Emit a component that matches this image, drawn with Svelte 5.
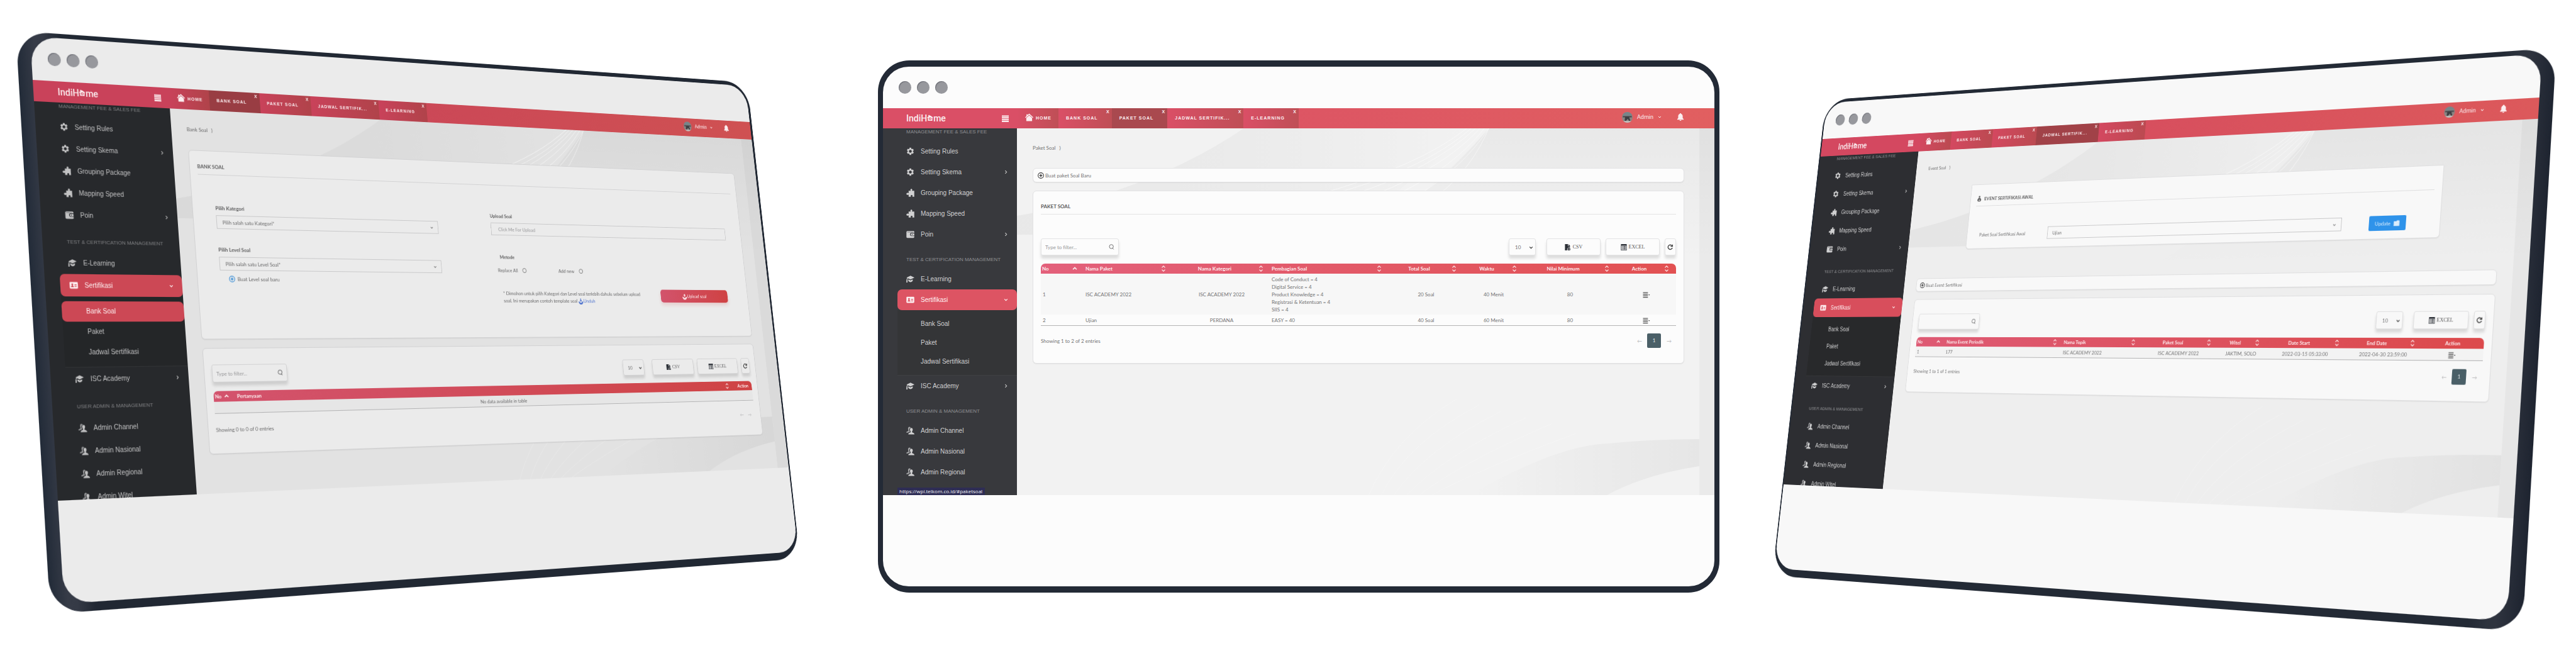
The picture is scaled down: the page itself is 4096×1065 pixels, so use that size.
<script>
  const UNIT = 4096;

  const tabs = ['BANK SOAL', 'PAKET SOAL', 'JADWAL SERTIFIK...', 'E-LEARNING'];

  const menuTop = [
    { icon: 'gear', label: 'Setting Rules' },
    { icon: 'gear', label: 'Setting Skema', more: true },
    { icon: 'puzzle', label: 'Grouping Package' },
    { icon: 'puzzle', label: 'Mapping Speed' },
    { icon: 'wallet', label: 'Poin', more: true }
  ];
  const submenu = ['Bank Soal', 'Paket', 'Jadwal Sertifikasi'];
  const admins = ['Admin Channel', 'Admin Nasional', 'Admin Regional'];

  // Corner order: top left, top right, bottom right, bottom left.
  const devices = [
    {
      id: 'bank',
      tab: 0,
      crumb: 'Bank Soal',
      sub: 0,
      body: [[25, 49], [1188, 131], [1272, 888], [80, 976]],
      face: [[52, 127], [1192, 194], [1254, 743], [92, 796]],
      admins: [...admins, 'Admin Witel'],
      csv: true,
      filter: true,
      columns: [
        { label: 'No', width: 36, sort: 'up' },
        { label: 'Pertanyaan', width: 936, sort: 'both' },
        { label: 'Action', width: 38, center: true }
      ],
      rows: [],
      info: 'Showing 0 to 0 of 0 entries'
    },
    {
      id: 'paket',
      tab: 1,
      crumb: 'Paket Soal',
      title: 'PAKET SOAL',
      create: 'Buat paket Soal Baru',
      admins,
      csv: true,
      filter: true,
      status: 'https://wpi.telkom.co.id/#paketsoal',
      columns: [
        { label: 'No', width: 69, sort: 'up' },
        { label: 'Nama Paket', width: 141, sort: 'both' },
        { label: 'Nama Kategori', width: 155, sort: 'both', center: true },
        { label: 'Pembagian Soal', width: 188, sort: 'both' },
        { label: 'Total Soal', width: 119, sort: 'both', center: true },
        { label: 'Waktu', width: 96, sort: 'both', center: true },
        { label: 'Nilai Minimum', width: 147, sort: 'both', center: true },
        { label: 'Action', width: 95, sort: 'both', center: true }
      ],
      rows: [
        ['1', 'ISC ACADEMY 2022', 'ISC ACADEMY 2022', 'Code of Conduct = 4\nDigital Service = 4\nProduct Knowledge = 4\nRegistrasi & Ketentuan = 4\nSIIS = 4', '20 Soal', '40 Menit', '80', null],
        ['2', 'Ujian', 'PERDANA', 'EASY = 40', '40 Soal', '60 Menit', '80', null]
      ],
      info: 'Showing 1 to 2 of 2 entries'
    },
    {
      id: 'event',
      tab: 2,
      crumb: 'Event Soal',
      create: 'Buat Event Sertifikasi',
      admins: [...admins, 'Admin Witel'],
      body: [[2903, 159], [4065, 76], [4011, 1004], [2818, 915]],
      face: [[2898, 221], [4038, 155], [3997, 824], [2836, 770]],
      columns: [
        { label: 'No', width: 60, sort: 'up' },
        { label: 'Nama Event Periodik', width: 231, sort: 'both' },
        { label: 'Nama Topik', width: 147, sort: 'both' },
        { label: 'Paket Soal', width: 136, sort: 'both', center: true },
        { label: 'Witel', width: 84, sort: 'both', center: true },
        { label: 'Date Start', width: 134, sort: 'both', center: true },
        { label: 'End Date', width: 122, sort: 'both', center: true },
        { label: 'Action', width: 96, center: true }
      ],
      rows: [
        ['1', '177', 'ISC ACADEMY 2022', 'ISC ACADEMY 2022', 'JAKTIM, SOLO', '2022-03-15 05:33:00', '2022-04-30 23:59:00', null]
      ],
      info: 'Showing 1 to 1 of 1 entries'
    }
  ];

  // Matrix that carries the rectangle (0, top, w, h) onto a quadrilateral.
  function matrix(top, w, h, [p0, p1, p2, p3]) {
    const dx1 = p1[0] - p2[0], dx2 = p3[0] - p2[0], dx3 = p0[0] - p1[0] + p2[0] - p3[0];
    const dy1 = p1[1] - p2[1], dy2 = p3[1] - p2[1], dy3 = p0[1] - p1[1] + p2[1] - p3[1];
    const det = dx1 * dy2 - dx2 * dy1;
    const g = (dx3 * dy2 - dx2 * dy3) / det;
    const k = (dx1 * dy3 - dx3 * dy1) / det;
    const col = [(p1[0] - p0[0] + g * p1[0]) / w, (p1[1] - p0[1] + g * p1[1]) / w, g / w];
    const row = [(p3[0] - p0[0] + k * p3[0]) / h, (p3[1] - p0[1] + k * p3[1]) / h, k / h];
    const org = [p0[0] - row[0] * top, p0[1] - row[1] * top, 1 - row[2] * top];
    return `matrix3d(${[col[0], col[1], 0, col[2], row[0], row[1], 0, row[2], 0, 0, 1, 0, org[0], org[1], 0, org[2]].join(',')})`;
  }

  // Tilts a layer of a device; the quad is anchored to the layer's app area if it has one.
  function tilt(node, quad) {
    if (!quad) return;
    const device = node.parentElement;
    const scene = device.parentElement;
    const update = () => {
      const scale = scene.clientWidth / UNIT;
      const x = device.offsetLeft + node.offsetLeft;
      const y = device.offsetTop + node.offsetTop;
      const app = node.querySelector('.app');
      const local = quad.map(([px, py]) => [px * scale - x, py * scale - y]);
      node.style.transform = matrix(
        app ? app.offsetTop : 0,
        node.offsetWidth,
        app ? app.offsetHeight : node.offsetHeight,
        local
      );
    };
    const watcher = new ResizeObserver(update);
    watcher.observe(scene);
    watcher.observe(node);
    update();
    return { destroy: () => watcher.disconnect() };
  }
</script>

{#snippet icon(name)}
  <svg class="icon" viewBox="0 0 24 24" fill="currentColor" aria-hidden="true">
    {#if name === 'gear'}
      <path d="M19.6 12.9c.04-.3.06-.6.06-.9s-.02-.6-.07-.9l2.3-1.7c.2-.1.3-.4.1-.6l-2.2-3.9c-.1-.2-.4-.3-.6-.2l-2.7 1c-.5-.4-1-.7-1.6-.9L14.5 1.900c0-.2-.2-.4-.5-.4h-4c-.2 0-.4.2-.5.4l-.4 2.900c-.6.2-1.100.5-1.600.9l-2.700-1c-.2-.1-.5 0-.6.2L2 8.800c-.1.2-.1.5.1.6l2.300 1.700c-.05.3-.07.6-.07.9s.02.6.07.9l-2.300 1.700c-.2.1-.2.4-.1.6l2.200 3.900c.1.2.4.3.6.2l2.700-1c.5.4 1 .7 1.600.9l.4 2.900c.1.2.3.4.5.4h4c.3 0 .5-.2.5-.4l.4-2.900c.6-.2 1.100-.5 1.600-.9l2.700 1c.2.1.5 0 .6-.2l2.200-3.900c.1-.2.1-.5-.1-.6zM12 16.200a4.200 4.200 0 1 1 0-8.400 4.200 4.200 0 0 1 0 8.400z" />
    {:else if name === 'puzzle'}
      <path d="M7 6h6.500c-1-.9-1.300-1.800-1.300-2.600C12.200 1.500 13.500.3 15 .3s2.800 1.200 2.800 3.100c0 .8-.4 1.700-1.300 2.600H23.500v17.500h-6c.7-.8 1-1.600 1-2.400 0-1.600-1.200-2.700-2.700-2.700s-2.700 1.100-2.700 2.700c0 .8.300 1.600 1 2.400H7v-6.500c-.9.900-1.800 1.200-2.600 1.200C2.300 18.200.5 17 .5 15s1.800-3.200 3.900-3.200c.8 0 1.700.3 2.600 1.200z" />
    {:else if name === 'wallet'}
      <path fill-rule="evenodd" d="M4 2.500h17c1.500 0 2.500 1 2.500 2.500v2.500H15c-2.500 0-4 2-4 4.500s1.500 5 4 5h8.500V20c0 1.500-1 2.500-2.500 2.500H3.500C1.800 22.500.5 21.200.5 19.500V5.500C.5 3.800 2.200 2.500 4 2.500zM3 5v1.200h17V5zM15.500 9.300h8v6.200h-8c-1.500 0-2.500-1.500-2.500-3.100s1-3.100 2.500-3.100zm.8 2v2.200h2.200v-2.200z" />
    {:else if name === 'cap'}
      <path d="M12.500 2.500 24 8l-11.500 5.500L5 10c-1.500.8-2 2-2 4 1.500 1 1.200 2.500.5 3L4 22H0l.8-5c-.8-1-.6-2.300.4-3C1.200 11.500 1.800 10 3 9L1 8zM6 12.800l6.500 3.200 6.500-3.200v4.700c-2 2.500-4.500 3.500-6.500 3.500S8 20 6 17.500z" />
    {:else if name === 'card'}
      <path fill-rule="evenodd" d="M3 3h18c1.500 0 2.500 1 2.500 2.500v13c0 1.500-1 2.500-2.500 2.500H3C1.500 21 .5 20 .5 18.500v-13C.5 4 1.500 3 3 3zm5 4a2.500 2.500 0 0 0-1.500 4.500V13L4 15.500V17h8v-1.500L9.500 13v-1.500A2.500 2.500 0 0 0 8 7zm6 2v1.500h6V9zm0 3v1.500h6V12zm0 3v1.500h6V15z" />
    {:else if name === 'users'}
      <path opacity=".7" d="M9 1c2 0 3.500 1 4 2.700-3 .5-4.500 3-4 6.300.2 1.800.8 3.200 1.800 4.200L10 15.500c-2 .7-4 1.300-5 2.500H0c0-3 3-4 6.200-5.200V10.500C5 8.500 4.500 1 9 1z" />
      <path d="M15 4c3 0 4.300 2.500 4 5.500-.2 2-.8 3.500-1.800 4.500v3c3 1 6.500 1.800 6.800 6H6c.3-4.200 3.800-5 6.800-6v-3c-1-1-1.600-2.500-1.800-4.500C10.700 6.500 12 4 15 4z" />
    {:else if name === 'home'}
      <path d="M12 1 24 12l-1.800 1.800L12 4.600 1.800 13.800 0 12l4-3.700V3h3.500v2.100z" /><path d="M12 6.500 20.500 14v9h-17v-9z" />
    {:else if name === 'bars'}
      <path d="M0 1h24v4.500H0zM0 7.200h24v4.500H0zM0 13.400h24v4.500H0zM0 19.600h24V24H0z" />
    {:else if name === 'bell'}
      <path d="M12 0c1.300 0 2.200 1 2.200 2.200 3.300 1 5 3.800 5 7.800v5.500l3 3v2H1.800v-2l3-3V10c0-4 1.700-6.800 5-7.800C9.800 1 10.700 0 12 0zM9 21.500h6c0 1.500-1.300 2.500-3 2.500s-3-1-3-2.500z" />
    {:else if name === 'plus'}
      <g fill="none" stroke="currentColor" stroke-width="2.6"><circle cx="12" cy="12" r="10.500" /><path d="M12 6.500v11M6.500 12h11" stroke-width="3.4" /></g>
    {:else if name === 'search'}
      <g fill="none" stroke="currentColor" stroke-width="2.6"><circle cx="11" cy="10.500" r="8.500" /><path d="m15 16 5.500 6.500" /></g>
    {:else if name === 'down'}
      <path fill="none" stroke="currentColor" stroke-width="4" d="m4 8 8 8 8-8" />
    {:else if name === 'right'}
      <path fill="none" stroke="currentColor" stroke-width="3.6" d="m8 4 8 8-8 8" />
    {:else if name === 'up'}
      <path fill="none" stroke="currentColor" stroke-width="4" d="m5 15 7-7 7 7" />
    {:else if name === 'both'}
      <path fill="none" stroke="currentColor" stroke-width="2.8" d="m6 8 6-6 6 6M6 16l6 6 6-6" />
    {:else if name === 'upload'}
      <path d="M12 0l6 6.500h-4v6h-4v-6H6zM1 12h4.500l3 4.500h7l3-4.500H23c.5 7-4 12-11 12S.5 19 1 12z" />
    {:else if name === 'download'}
      <path d="M10 0h4v7h4l-6 7-6-7h4zM1 12h4.500l3 4.500h7l3-4.500H23c.5 7-4 12-11 12S.5 19 1 12z" />
    {:else if name === 'file'}
      <path d="M1 0h11v8h8v5h-7l-4 5v6H1z" /><path d="M14 0l7 7h-7z" /><path fill="none" stroke="currentColor" stroke-width="2.4" d="M12 16.500h8v6h-8zM16 14v9" />
    {:else if name === 'sheet'}
      <path fill-rule="evenodd" d="M1 0h22v24H1zm2 6v16h18V6zm2 2h3v2.500H5zm5 0h9v2.500h-9zm-5 4.500h3V15H5zm5 0h9V15h-9zM5 17h3v2.500H5zm5 0h9v2.500h-9z" />
    {:else if name === 'reload'}
      <g fill="none" stroke="currentColor" stroke-width="3.4"><path d="M19.500 14.500a8.500 8.500 0 1 1-1.500-8.300" /><path d="M20 1.500v7h-7" /></g>
    {:else if name === 'folder'}
      <path d="M1 5h10l1.500-3H22l1 3v17H1z" />
    {:else if name === 'person'}
      <circle cx="12" cy="4" r="4" /><path fill-rule="evenodd" d="M7 9h10l5 9-3 2v3H5v-3l-3-2zm5 5-3.500 5h7z" />
    {:else if name === 'menu'}
      <path d="M0 3h17v3H0zM0 8.500h17v3H0zM0 14h17v3H0zM0 19.500h17v3H0zM18.500 11h5.500l-2.700 3.500z" />
    {/if}
  </svg>
{/snippet}

{#snippet menuItem(name, label, more)}
  <a class="item" href="#menu">
    {@render icon(name)}<span>{label}</span>
    {#if more}<i>{@render icon('right')}</i>{/if}
  </a>
{/snippet}

{#snippet lengthAndExport(d)}
  <div class="tools">
    <label class="search">
      <input type="text" placeholder={d.filter ? 'Type to filter...' : ''} aria-label="Filter" />
      {@render icon('search')}
    </label>
    <span class="pick length">
      <select aria-label="Rows per page"><option>10</option></select>
      {@render icon('down')}
    </span>
    {#if d.csv}<button class="export">{@render icon('file')}<span>CSV</span></button>{/if}
    <button class="export">{@render icon('sheet')}<span>EXCEL</span></button>
    <button class="reload" aria-label="Reload">{@render icon('reload')}</button>
  </div>
{/snippet}

<main class="scene">
  {#each devices as d (d.id)}
    <section class="device {d.id}">
      <div class="body" use:tilt={d.body}></div>
      <div class="screen" use:tilt={d.face}>
        <div class="chrome"><b></b><b></b><b></b></div>

        <div class="app">
          <header class="bar">
            <div class="brand">
              <a class="logo" href="#home" aria-label="IndiHome">
                <span>IndiH</span>
                <svg viewBox="0 0 24 24" fill="currentColor" aria-hidden="true"><path fill-rule="evenodd" d="M5 1 9 .5 10 3l3 .2 10.500 7-1.200 2L20.500 11v12h-17V11l-2 1.300L0 10.500 5.500 6zM12 10a5 5 0 1 0 0 10 5 5 0 0 0 0-10zm0 2.500a2.500 2.500 0 1 1 0 5 2.500 2.500 0 0 1 0-5z" /></svg>
                <span>me</span>
              </a>
              <button class="toggle" aria-label="Menu">{@render icon('bars')}</button>
            </div>
            <nav class="tabs">
              <a class="tab home" href="#home">{@render icon('home')}HOME</a>
              {#each tabs as tab, n}
                <div class="tab" class:active={n === d.tab}>
                  <a href="#tab">{tab}</a>
                  <button aria-label="Close {tab}">X</button>
                </div>
              {/each}
            </nav>
            <button class="account">
              <svg class="avatar" viewBox="0 0 24 24" aria-hidden="true"><circle cx="12" cy="12" r="12" fill="#8a8583" /><path d="M1 8a12 12 0 0 1 22 0z" fill="#77868a" /><path d="M2 9h20v3H2z" fill="#47494d" /><path d="M7 11h9l3 9h-3l-3-5-4 5H6z" fill="#3d3e42" /><path d="M3 20h18a12 12 0 0 1-18 0z" fill="#c3bfbd" /></svg>
              Admin {@render icon('down')}
            </button>
            <button class="bell" aria-label="Notifications">{@render icon('bell')}</button>
          </header>

          <div class="work">
            <aside class="side">
              <h3 class="cut">MANAGEMENT FEE &amp; SALES FEE</h3>
              {#each menuTop as m}{@render menuItem(m.icon, m.label, m.more)}{/each}
              <h3>TEST &amp; CERTIFICATION MANAGEMENT</h3>
              {@render menuItem('cap', 'E-Learning')}
              <a class="item open" href="#menu">
                {@render icon('card')}<span>Sertifikasi</span><i>{@render icon('down')}</i>
              </a>
              <div class="submenu">
                {#each submenu as s, n}<a class:active={n === d.sub} href="#sub">{s}</a>{/each}
              </div>
              {@render menuItem('cap', 'ISC Academy', true)}
              <h3>USER ADMIN &amp; MANAGEMENT</h3>
              {#each d.admins as a}{@render menuItem('users', a)}{/each}
              {#if d.status}<div class="status">{d.status}</div>{/if}
            </aside>

            <div class="content">
              <svg class="waves" viewBox="0 0 1110 583" preserveAspectRatio="none" aria-hidden="true">
                <defs>
                  <linearGradient id="{d.id}-fade"><stop offset="0" stop-color="#000" stop-opacity=".04" /><stop offset=".5" stop-color="#000" stop-opacity=".03" /><stop offset="1" stop-color="#000" stop-opacity="0" /></linearGradient>
                  <linearGradient id="{d.id}-fall" x2="0" y2="1"><stop offset="0" stop-color="#000" stop-opacity=".04" /><stop offset="1" stop-color="#000" stop-opacity="0" /></linearGradient>
                  <linearGradient id="{d.id}-base"><stop offset="0" stop-color="#000" stop-opacity="0" /><stop offset="1" stop-color="#000" stop-opacity=".05" /></linearGradient>
                </defs>
                <path d="M0 139C120 118 250 75 361 0H730L520 169H0Z" fill="url(#{d.id}-fade)" />
                <path d="M751 0H1110V210H480Q640 130 751 0z" fill="url(#{d.id}-fall)" />
                <g fill="none" stroke="#fff" stroke-opacity=".5">
                  <path d="M716 0Q640 60 480 105M723 0Q650 65 500 105M730 0Q660 65 535 105M737 0Q680 62 570 105M744 0Q695 62 605 105M751 0Q710 62 640 105M751 0Q725 62 672 105" />
                </g>
                <g fill="none" stroke="#fff" stroke-opacity=".2">
                  <path d="M560 583Q600 490 700 430M580 583Q620 500 735 440M600 583Q650 510 770 450M620 583Q680 520 810 460M640 583Q710 530 850 470M660 583Q740 540 890 485" />
                </g>
                <path d="M720 583Q860 503 940 501Q1010 494 1086 494V537Q1000 550 939 583z" fill="url(#{d.id}-base)" />
                <path d="M1086 0h24v583h-24z" fill="#000" fill-opacity=".03" />
              </svg>

              <div class="crumb">{d.crumb}<span>⟩</span></div>

              {#if d.id === 'bank'}
                <section class="card form">
                  <h2>BANK SOAL</h2>
                  <form>
                    <div class="field">
                      <label for="kategori">Pilih Kategori</label>
                      <span class="pick"><select id="kategori"><option>Pilih salah satu Kategori*</option></select>{@render icon('down')}</span>
                      <label class="second" for="level">Pilih Level Soal</label>
                      <span class="pick"><select id="level"><option>Pilih salah satu Level Soal*</option></select>{@render icon('down')}</span>
                      <a class="add" href="#level">{@render icon('plus')}Buat Level soal baru</a>
                    </div>
                    <div class="field">
                      <label for="upload">Upload Soal</label>
                      <input id="upload" type="text" placeholder="Click Me For Upload" />
                      <div class="method" role="radiogroup" aria-labelledby="metode">
                        <h4 id="metode">Metode</h4>
                        <div class="choices">
                          <label>Replace All <input type="radio" name="metode" /></label>
                          <label>Add new <input type="radio" name="metode" /></label>
                        </div>
                      </div>
                      <div class="send">
                        <p>* Dimohon untuk pilih Kategori dan Level soal terlebih dahulu sebelum upload<br />soal. Ini merupakan contoh template soal <a href="#unduh">{@render icon('download')}Unduh</a></p>
                        <button type="button">{@render icon('upload')}Upload soal</button>
                      </div>
                    </div>
                  </form>
                </section>
              {/if}

              {#if d.id === 'event'}
                <section class="card first">
                  <h2>{@render icon('person')}EVENT SERTIFIKASI AWAL</h2>
                  <form class="line">
                    <label for="awal">Paket Soal Sertifikasi Awal</label>
                    <span class="pick"><select id="awal"><option>Ujian</option></select>{@render icon('down')}</span>
                    <button type="button">Update {@render icon('folder')}</button>
                  </form>
                </section>
              {/if}

              {#if d.create}
                <a class="card create" href="#create">{@render icon('plus')}{d.create}</a>
              {/if}

              <section class="card list" class:titled={d.title}>
                {#if d.title}<h2>{d.title}</h2>{/if}
                {@render lengthAndExport(d)}
                <div class="grid">
                  <table>
                    <colgroup>{#each d.columns as c}<col style="width:{c.width / 10.1}%" />{/each}</colgroup>
                    <thead>
                      <tr>
                        {#each d.columns as c}
                          <th class:center={c.center} class:sorted={c.sort}>{c.label}{#if c.sort}<i>{@render icon(c.sort)}</i>{/if}</th>
                        {/each}
                      </tr>
                    </thead>
                    <tbody>
                      {#each d.rows as row}
                        <tr>
                          {#each row as cell, n}
                            <td class:center={d.columns[n].center}>{#if cell === null}<button class="action" aria-label="Actions">{@render icon('menu')}</button>{:else}{cell}{/if}</td>
                          {/each}
                        </tr>
                      {:else}
                        <tr><td class="center" colspan={d.columns.length}>No data available in table</td></tr>
                      {/each}
                    </tbody>
                  </table>
                </div>
                <footer>
                  <span>{d.info}</span>
                  <nav>
                    <a href="#prev">←</a>
                    {#if d.rows.length}<a class="now" href="#page">1</a>{/if}
                    <a href="#next">→</a>
                  </nav>
                </footer>
              </section>
            </div>
          </div>
        </div>
      </div>
    </section>
  {/each}
</main>

<style>
  :global(body) { background: #fff; }

  .scene {
    position: relative;
    display: grid;
    grid-template-columns: repeat(3, 1fr);
    gap: 24px;
    align-items: start;
    min-height: 100vh;
    padding: 96px 0 0 34px;
    box-sizing: border-box;
    overflow: hidden;
    font: 8px/12px Lato, 'Open Sans', sans-serif;
  }
  .scene :global(*) { box-sizing: border-box; }

  .device {
    --paper: #fcfcfc;
    --ground: #f2f2f2;
    --side: #38393d;
    --sub: #343537;
    --head: #da4f66;
    --head-end: #e15f60;
    --tab-end: #bf4f56;
    --tab-on: #a9494f;
    --open: #dd5463;
    --th: #e3607b;
    --th-end: #e25152;
    --line: #e3e3e4;
    --ink: #727273;
    --menu: #d0d0d1;
    --muted: #8f9093;
    --shell: #232a36;
    position: relative;
    display: flex;
    padding: 10px 8px;
    aspect-ratio: 1338 / 846;
  }
  .bank {
    --paper: #ebebeb;
    --ground: #e2e2e2;
    --side: #27292c;
    --sub: #242628;
    --head: #c9425a;
    --head-end: #cf5152;
    --tab-end: #b0434a;
    --tab-on: #993d43;
    --open: #cc4855;
    --th: #d3536d;
    --th-end: #cf4344;
    --line: #d2d2d3;
    --ink: #686869;
    --menu: #c2c2c3;
    --muted: #808184;
    --shell: linear-gradient(90deg, #222b38, #363b47 2%, #353a46 3%, #212833 5%);
  }
  .event {
    --paper: #f8f8f8;
    --ground: #eeeeee;
    --side: #2d2e32;
    --sub: #28292b;
    --head: #d44860;
    --head-end: #dc595b;
    --tab-end: #bb4a51;
    --tab-on: #a14248;
    --open: #d84e5c;
    --th: #de5a74;
    --th-end: #dc4a4c;
    --line: #dfdfe0;
    --shell: linear-gradient(270deg, #1e2430, #2f343f 3%, #2d333e 4%, #232a35 6%);
  }

  .body {
    position: absolute;
    inset: 0;
    border-radius: 50px;
    outline: 1px solid transparent;
    background: var(--shell);
    transform-origin: 0 0;
  }
  .screen {
    position: relative;
    flex: 1;
    display: flex;
    flex-direction: column;
    min-width: 0;
    border-radius: 41px;
    outline: 1px solid transparent;
    overflow: hidden;
    background: var(--paper);
    transform-origin: 0 0;
  }
  .chrome {
    flex: 0 0 66px;
    display: flex;
    gap: 9px;
    padding: 23px 25px;
  }
  .chrome b {
    width: 20px;
    height: 20px;
    border-radius: 50%;
    background: #97989d;
    box-shadow: inset 1px 1px 1px #6f7178;
  }
  .app {
    flex: 1;
    display: flex;
    flex-direction: column;
    min-height: 0;
    margin-bottom: 145px;
  }

  .icon { display: block; width: 10px; height: 10px; flex: none; }
  a { color: inherit; text-decoration: none; }
  button, input, select { font: inherit; color: inherit; margin: 0; border: 0; padding: 0; background: none; border-radius: 0; }
  h2, h3, h4, p { margin: 0; }

  .bar {
    flex: 0 0 32px;
    display: flex;
    align-items: stretch;
    color: #fbeef0;
    background: linear-gradient(90deg, var(--head) 16%, var(--head-end));
  }
  .brand {
    flex: 0 0 213px;
    display: flex;
    align-items: center;
    justify-content: space-between;
    padding: 0 12px 0 37px;
  }
  .logo {
    display: flex;
    align-items: center;
    font: 500 14px/16px Roboto, sans-serif;
  }
  .logo svg { width: 10px; height: 13px; margin-bottom: 2px; }
  .toggle .icon { width: 13px; height: 11px; }
  .tabs { display: flex; flex: 1; font: 700 7px/12px 'Liberation Sans', sans-serif; letter-spacing: 1px; }
  .tab {
    position: relative;
    display: flex;
    align-items: center;
    padding: 0 22px 0 12px;
    background: linear-gradient(90deg, var(--head), var(--tab-end));
  }
  .tab.active { background: var(--tab-on); }
  .tab button { position: absolute; top: 0; right: 4px; letter-spacing: 0; }
  .tab.home { padding: 0 11px 0 13px; gap: 4px; }
  .tab.home .icon { width: 13px; height: 13px; margin-bottom: 4px; }
  .account { display: flex; align-items: center; gap: 7px; margin: 0 24px 4px 0; font: 9px/12px Roboto, sans-serif; }
  .account .icon { width: 6px; height: 6px; }
  .avatar { width: 17px; height: 17px; }
  .bell { margin: 0 48px 4px 0; }
  .bell .icon { width: 12px; height: 12px; }

  .work { flex: 1; display: flex; min-height: 0; }
  .side {
    position: relative;
    flex: 0 0 213px;
    padding-left: 23px;
    overflow: hidden;
    background: var(--side);
    color: var(--menu);
    font: 10px/12px 'Liberation Sans', sans-serif;
  }
  .side h3 {
    height: 38px;
    padding: 18px 0 0 14px;
    font: 400 8px/12px 'Liberation Sans', sans-serif;
    color: var(--muted);
    white-space: nowrap;
  }
  .side h3.cut { height: 20px; padding-top: 0; }
  .item {
    display: flex;
    align-items: center;
    gap: 10px;
    height: 33px;
    padding: 0 14px;
  }
  .item .icon { width: 13px; height: 13px; }
  .item i { margin-left: auto; }
  .item i .icon { width: 7px; height: 7px; }
  .item.open { border-radius: 7px; background: var(--open); color: #fdf0f1; }
  .submenu { padding: 7px 0 6px; background: var(--sub); border-bottom: 1px solid #ffffff10; }
  .submenu a { display: flex; align-items: center; height: 30px; padding-left: 37px; border-radius: 7px; }
  .submenu a.active { background: var(--open); color: #fdf0f1; }
  .status {
    position: absolute;
    left: 23px;
    bottom: 0;
    padding: 0 4px 0 3px;
    background: #2e2d55;
    color: #f2f2f6;
    font: 8px/12px 'Open Sans', sans-serif;
  }

  .content {
    position: relative;
    flex: 1;
    min-width: 0;
    padding: 25px 48px 0 25px;
    background: var(--ground);
    color: var(--ink);
    overflow: hidden;
  }
  .waves { position: absolute; inset: 0; width: 100%; height: 100%; }
  .crumb { position: relative; display: flex; gap: 6px; margin-bottom: 26px; }

  .card {
    position: relative;
    display: block;
    margin-bottom: 13px;
    padding: 0 12px;
    border: 1px solid var(--line);
    border-radius: 6px;
    background: var(--paper);
    box-shadow: 0 1px 1px #00000010;
  }
  .card h2 {
    display: flex;
    align-items: center;
    gap: 5px;
    padding: 18px 0 6px;
    border-bottom: 1px solid var(--line);
    font: 700 8px/12px Lato, sans-serif;
    color: #5c5c5d;
  }
  .create { display: flex; align-items: center; height: 23px; padding: 0 7px; gap: 2px; }
  .create .icon { color: #404041; }

  .tools { display: flex; align-items: center; padding-top: 24px; height: 51px; }
  .titled .tools { padding-top: 38px; height: 65px; }
  .search, .length, .export, .reload {
    height: 27px;
    border: 1px solid var(--line);
    border-radius: 3px;
    background: var(--paper);
    box-shadow: 0 5px 4px #00000020;
  }
  .search { display: flex; align-items: center; width: 124px; padding: 0 6px; margin-right: auto; }
  .search input { width: 0; flex: 1; }
  .search .icon { width: 9px; height: 9px; }
  input::placeholder { color: #98989a; opacity: 1; }
  .pick { position: relative; display: flex; }
  .pick select { appearance: none; width: 100%; height: 100%; padding: 0 9px; }
  .pick .icon { position: absolute; right: 8px; top: 50%; width: 6px; height: 6px; margin-top: -3px; pointer-events: none; }
  .length { width: 43px; margin-right: 17px; }
  .length .icon { right: 3px; width: 7px; height: 7px; color: #333; }
  .export { display: flex; align-items: center; justify-content: center; gap: 3px; width: 86px; margin-right: 8px; font: 8px/12px 'Liberation Serif', serif; color: #555556; }
  .export .icon { color: #2b2f36; }
  .reload { display: flex; align-items: center; justify-content: center; width: 18px; color: #444; }

  .grid { margin-top: 13px; border-radius: 7px 7px 0 0; overflow: hidden; border-bottom: 1px solid #b4b4b5; }
  table { width: 100%; table-layout: fixed; border-collapse: collapse; }
  thead tr { background: linear-gradient(90deg, var(--th), var(--th-end)); }
  th { position: relative; height: 16px; padding: 0 2px; text-align: left; color: #fdeff0; font-weight: 700; line-height: 12px; white-space: nowrap; }
  th i { position: absolute; right: 10px; top: 3px; }
  th.center.sorted { padding-right: 24px; }
  td { padding: 3px 2px 2px; white-space: pre-line; vertical-align: middle; }
  tbody tr:nth-child(odd) { background: #00000005; }
  td:first-child { padding-left: 3px; }
  .center { text-align: center; }
  .action { display: inline-block; vertical-align: middle; height: 11px; line-height: 11px; color: #555; }
  .action .icon { width: 14px; height: 11px; }

  footer { display: flex; align-items: center; justify-content: space-between; padding: 12px 0 24px; }
  footer nav { display: flex; align-items: center; height: 23px; padding-right: 6px; color: #b5b5b7; }
  footer nav a { min-width: 10px; text-align: center; margin-left: 7px; }
  .now { width: 22px; margin-right: 1px; border-radius: 2px; line-height: 23px; background: #4a5f67; color: #e8eef0; }

  .form form { display: flex; gap: 99px; padding: 45px 21px 55px 25px; height: 251px; }
  .field { flex: 387 1 0; display: flex; flex-direction: column; }
  .field + .field { flex-grow: 478; }
  .field > label, h4 { font: 700 8px/12px Lato, sans-serif; color: #5a5a5b; }
  .field > label { margin-bottom: 5px; }
  .field > .second { margin-top: 26px; }
  .form .pick, .first .pick, #upload { height: 21px; flex: none; border: 1px solid #c9c9ca; }
  #upload { padding: 0 13px; }
  .add { display: flex; align-items: center; gap: 4px; margin: 7px 0 0 14px; }
  .add .icon { color: #3c8fd6; }
  .method { padding: 30px 0 24px 6px; }
  h4 { padding-left: 6px; }
  .choices { display: flex; gap: 62px; padding-top: 10px; }
  .choices label { display: flex; align-items: center; gap: 9px; }
  .choices input { appearance: none; width: 8px; height: 8px; border: 1px solid #777; border-radius: 50%; }
  .send { display: flex; justify-content: space-between; padding: 0 10px 0 12px; white-space: nowrap; }
  .send p { padding-top: 2px; }
  .send a { color: #5578cf; }
  .send .icon { display: inline-block; vertical-align: middle; }
  .send button { width: 142px; height: 22px; flex: none; border-radius: 5px; background: linear-gradient(90deg, #d2536c, #cf4243); color: #fbe9ea; box-shadow: 0 4px 6px #d0454530; }

  .card.first { margin: 0 93px 49px 94px; border-radius: 0 0 6px 6px; }
  .line { display: flex; align-items: center; padding: 37px 42px 12px 12px; }
  .line label { flex: 0 0 135px; }
  .line .pick { flex: 1; margin-right: 45px; }
  .line button { display: flex; align-items: center; justify-content: center; gap: 5px; width: 60px; height: 23px; border-radius: 2px; background: #2f93ea; color: #d9ecfc; }
</style>
